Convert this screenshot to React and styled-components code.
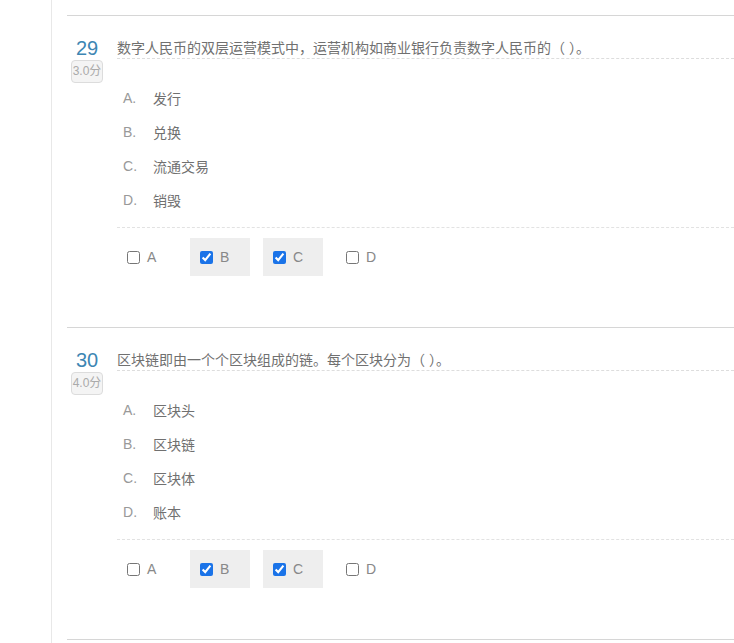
import React from "react";
import styled, { createGlobalStyle } from "styled-components";

const questions = [
    {
        no: 29,
        score: "3.0分",
        title: "数字人民币的双层运营模式中，运营机构如商业银行负责数字人民币的（ ）。",
        options: ["发行", "兑换", "流通交易", "销毁"],
        answer: ["B", "C"],
    },
    {
        no: 30,
        score: "4.0分",
        title: "区块链即由一个个区块组成的链。每个区块分为（ ）。",
        options: ["区块头", "区块链", "区块体", "账本"],
        answer: ["B", "C"],
    },
];

const letters = ["A", "B", "C", "D"];

export default function App() {
    return (
        <>
            <GlobalStyle />
            <Page>
                <Panel>
                    {questions.map((q) => (
                        <Question key={q.no}>
                            <Header>
                                <NumberCol>
                                    <Number>{q.no}</Number>
                                    <Score>{q.score}</Score>
                                </NumberCol>
                                <Title>{q.title}</Title>
                            </Header>
                            <Options>
                                {q.options.map((text, i) => (
                                    <Option key={i}>
                                        <Letter>{letters[i]}.</Letter>
                                        <span>{text}</span>
                                    </Option>
                                ))}
                            </Options>
                            <Answers>
                                {letters.map((l) => {
                                    const on = q.answer.includes(l);
                                    return (
                                        <Choice key={l} checked={on}>
                                            <input type="checkbox" defaultChecked={on} />
                                            <span>{l}</span>
                                        </Choice>
                                    );
                                })}
                            </Answers>
                        </Question>
                    ))}
                    <Question />
                </Panel>
            </Page>
        </>
    );
}

const GlobalStyle = createGlobalStyle`
    body {
        margin: 0;
        background: #fff;
        font-family: "Liberation Sans", "Noto Sans CJK SC", sans-serif;
    }
`;

const Page = styled.div`
    padding-left: 51px;
    height: 643px;
    overflow: hidden;
`;

const Panel = styled.div`
    border-left: 1px solid #e8e8e8;
    padding: 15px 0 0 15px;
    min-height: 643px;
    box-sizing: border-box;
`;

const Question = styled.div`
    box-sizing: border-box;
    border-top: 1px solid #d6d6d6;
    height: 312px;
`;

const Header = styled.div`
    display: flex;
    padding-top: 20px;
`;

const NumberCol = styled.div`
    width: 40px;
    margin-right: 10px;
    display: flex;
    flex-direction: column;
    align-items: center;
`;

const Number = styled.div`
    font-family: "Liberation Sans", sans-serif;
    font-size: 20px;
    line-height: 24px;
    color: #3d86b3;
`;

const Score = styled.div`
    width: 30px;
    height: 21px;
    border: 1px solid #dcdcdc;
    border-radius: 4px;
    background: #f4f4f4;
    color: #aaa;
    font-size: 12px;
    line-height: 21px;
    text-align: center;
`;

const Title = styled.div`
    flex: 1;
    font-size: 14px;
    line-height: 20px;
    color: #707070;
    padding-top: 2px;
    height: 20px;
    border-bottom: 1px dashed #ddd;
`;

const Options = styled.div`
    margin: -2px 0 0 50px;
    padding: 0 0 10px 6px;
    border-bottom: 1px dashed #e2e2e2;
`;

const Option = styled.div`
    display: flex;
    height: 34px;
    align-items: center;
    font-size: 14px;
    color: #707070;
`;

const Letter = styled.span`
    width: 30px;
    color: #999;
`;

const Answers = styled.div`
    display: flex;
    gap: 13px;
    margin: 10px 0 0 50px;
`;

const Choice = styled.label`
    display: flex;
    align-items: center;
    width: 60px;
    height: 38px;
    box-sizing: border-box;
    padding-left: 7px;
    background: ${(p) => (p.checked ? "#eeeeee" : "transparent")};
    font-size: 14px;
    color: #888;

    input {
        margin: 0 7px 0 3px;
        width: 13px;
        height: 13px;
        accent-color: #1a73e8;
    }
`;
